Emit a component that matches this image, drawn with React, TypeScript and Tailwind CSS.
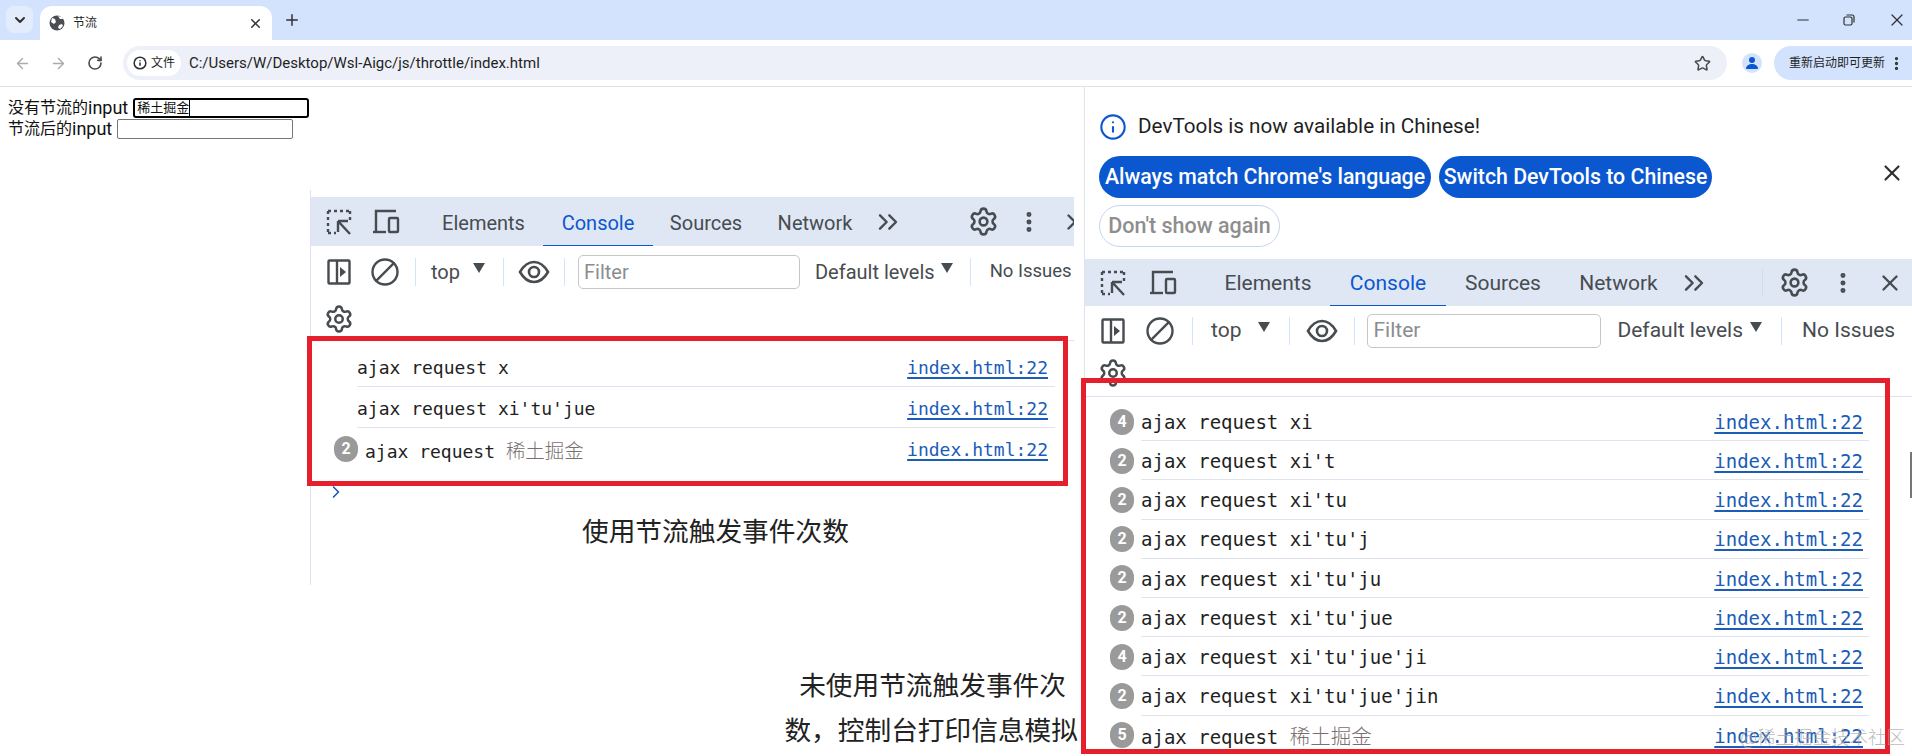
import React from 'react';
import { ArrowLeft, ArrowRight, Ban, ChevronDown, ChevronRight, ChevronsRight, EllipsisVertical, Info, Minus, Plus, RotateCw, Settings, Star, X } from 'lucide-react';

const InspectIcon = () => (
  <svg width="26" height="28" viewBox="0 0 26 28" fill="none" stroke="#474c50" strokeWidth="2.4">
    <path d="M2 3h22M2 3v22" strokeDasharray="3 3" />
    <path d="M24 3v9M2 25h8" strokeDasharray="3 3" />
    <path d="M12 13h10M12 13v11M12 13l12 13" />
  </svg>
);

const DeviceIcon = () => (
  <svg width="28" height="26" viewBox="0 0 28 26" fill="none" stroke="#474c50" strokeWidth="2.4">
    <path d="M4 22V2h20" />
    <path d="M1 23h13" />
    <rect x="17" y="9" width="9" height="14" rx="1" />
  </svg>
);

const SidebarIcon = () => (
  <svg width="24" height="26" viewBox="0 0 24 26" fill="none" stroke="#474c50" strokeWidth="2.4">
    <rect x="1.500" y="1.500" width="21" height="23" rx="1" />
    <path d="M10 2v22" />
    <path d="M13 8l6 5-6 5z" fill="#474c50" stroke="none" />
  </svg>
);

const EyeIcon = () => (
  <svg width="32" height="24" viewBox="0 0 32 24" fill="none" stroke="#474c50" strokeWidth="2.6">
    <path d="M2 12C6 5 11 2 16 2s10 3 14 10c-4 7-9 10-14 10S6 19 2 12z" />
    <circle cx="16" cy="12" r="5" />
  </svg>
);

const Caret = () => <span className="block w-0 h-0 border-x-[6px] border-x-transparent border-t-[10px] border-t-[#474c50]" />;
const Divider = () => <span className="block w-px h-7 bg-[#d3e3fd]" />;

const Tab = ({ label, active, className }: { label: string; active?: boolean; className: string }) => (
  <div className={`h-full flex items-center justify-center pt-[3px] ${className} ${active ? 'text-[#0b57d0] border-b border-[#0b57d0]' : 'text-[#474c50]'}`}>
    {label}
  </div>
);

const Badge = ({ count }: { count: number }) => (
  <span className="w-6 h-[26px] rounded-full bg-[#9a9a9a] text-white text-[16px] font-bold flex items-center justify-center font-['Roboto',sans-serif]">
    {count}
  </span>
);

const Row = ({ text, cjk, count, last, rowClass, gutterClass, contentClass, fontClass }: {
  text: string; cjk?: boolean; count?: number; last?: boolean; rowClass: string; gutterClass: string; contentClass: string; fontClass: string;
}) => (
  <div className={`flex ${rowClass} ${fontClass} font-['DejaVu_Sans_Mono','Noto_Sans_CJK_SC',monospace]`}>
    <div className={`flex items-center justify-end shrink-0 ${gutterClass}`}>{count ? <Badge count={count} /> : null}</div>
    <div className={`flex flex-1 items-center justify-between pt-[2px] ${last ? '' : 'border-b border-[#dfe3f0]'} ${contentClass}`}>
      <span className="text-[#1f1f1f] whitespace-pre">
        {text}
        {cjk ? ' ' : null}
        {cjk ? <span className="text-[#7a6f6f] text-[1.08em] font-['Noto_Sans_CJK_SC',serif] font-light">稀土掘金</span> : null}
      </span>
      <span className="text-[#1a5cb8] underline underline-offset-[3px] decoration-2">index.html:22</span>
    </div>
  </div>
);

const leftRows = [
  { text: 'ajax request x' },
  { text: "ajax request xi'tu'jue" },
  { text: 'ajax request', cjk: true, count: 2 },
];

const rightRows = [
  { text: 'ajax request xi', count: 4 },
  { text: "ajax request xi't", count: 2 },
  { text: "ajax request xi'tu", count: 2 },
  { text: "ajax request xi'tu'j", count: 2 },
  { text: "ajax request xi'tu'ju", count: 2 },
  { text: "ajax request xi'tu'jue", count: 2 },
  { text: "ajax request xi'tu'jue'ji", count: 4 },
  { text: "ajax request xi'tu'jue'jin", count: 2 },
  { text: 'ajax request', cjk: true, count: 5 },
];

export default function App() {
  return (
    <div className="relative w-[1912px] h-[756px] overflow-hidden bg-white font-['Roboto','Noto_Sans_CJK_SC',sans-serif]">
      {/* tab strip */}
      <div className="h-10 bg-[#d3e3fd] flex items-end text-[#1f1f1f]">
        <div className="w-[27px] h-[27px] ml-[6px] mb-[7px] rounded-lg bg-[#e3ecfd] flex items-center justify-center">
          <ChevronDown size={16} strokeWidth={3} color="#303030" />
        </div>
        <div className="w-[232px] h-[34px] ml-[7px] rounded-t-xl bg-white flex items-center pl-[9px] pr-[9px]">
          <svg width="16" height="16" viewBox="0 0 16 16">
            <circle cx="8" cy="8" r="7.500" fill="#4a4e52" />
            <path d="M3 3l3 1 1 3-2 2-3-2zM10 10l3-1 1 2-3 3-2-1zM9 1l2 3 3 0-1-2z" fill="#fff" />
          </svg>
          <span className="ml-2 text-xs flex-1">节流</span>
          <X size={15} strokeWidth={2.4} color="#303030" />
        </div>
        <Plus size={18} strokeWidth={2} color="#303030" className="ml-[11px] mb-[11px]" />
        <div className="flex-1" />
        <Minus size={18} strokeWidth={1.5} color="#303030" className="mb-[11px]" />
        <svg width="12" height="12" viewBox="0 0 12 12" fill="none" stroke="#303030" strokeWidth="1.2" className="ml-[31px] mb-[14px]">
          <rect x="1" y="3" width="8" height="8" rx="1.500" />
          <path d="M3.500 1H9a2 2 0 0 1 2 2v5.500" />
        </svg>
        <X size={20} strokeWidth={1.5} color="#303030" className="ml-[32px] mr-[5px] mb-[10px]" />
      </div>

      {/* toolbar */}
      <div className="h-[47px] bg-white border-b border-[#e3e3e3] flex items-center text-[#474c50]">
        <ArrowLeft size={17} color="#a8abaf" strokeWidth={2} className="ml-[14px]" />
        <ArrowRight size={17} color="#a8abaf" strokeWidth={2} className="ml-[19px]" />
        <RotateCw size={16} color="#474c50" strokeWidth={2.4} className="ml-[20px]" />
        <div className="w-[1605px] h-[34px] ml-[20px] rounded-full bg-[#edf0f8] flex items-center pl-[4px]">
          <div className="w-[54px] h-[26px] rounded-full bg-white flex items-center justify-center gap-1 text-[12px] text-[#1f1f1f]">
            <Info size={14} strokeWidth={2.6} color="#303030" />
            文件
          </div>
          <span className="ml-[8px] text-[15px] text-[#1f1f1f]">C:/Users/W/Desktop/Wsl-Aigc/js/throttle/index.html</span>
          <div className="flex-1" />
          <Star size={17} strokeWidth={2.2} color="#474c50" className="mr-[16px]" />
        </div>
        <div className="ml-[15px] w-5 h-5 rounded-full bg-[#d3e3fd] flex items-center justify-center overflow-hidden">
          <svg width="14" height="14" viewBox="0 0 14 14" fill="#0b57d0">
            <circle cx="7" cy="4" r="3" />
            <path d="M1 13c0-3.500 3-5 6-5s6 1.500 6 5z" />
          </svg>
        </div>
        <div className="ml-[12px] w-[138px] h-[34px] rounded-l-full bg-[#d3e3fd] flex items-center pl-[15px] text-[12px] text-[#1f1f1f]">
          重新启动即可更新
          <EllipsisVertical size={17} strokeWidth={2.6} color="#303030" className="ml-[3px]" />
        </div>
      </div>

      <div className="flex h-[669px]">
        {/* page */}
        <div className="w-[1084px] shrink-0 text-[16px] text-[#111]">
          <div className="pl-2 pt-[10px] leading-[21px] h-[54px]">
            <div className="flex items-center">
              没有节流的<span className="text-[18px]">input</span>
              <div className="ml-[5px] w-[176px] h-5 border-2 border-black rounded-[3px] text-[13px] leading-4 pl-[2px] flex items-center">
                稀土掘金<span className="w-px h-4 bg-black" />
              </div>
            </div>
            <div className="flex items-center">
              节流后的<span className="text-[18px]">input</span>
              <div className="ml-[5px] w-[176px] h-5 border border-[#767676] rounded-[2px]" />
            </div>
          </div>

          {/* pasted devtools */}
          <div className="ml-[310px] mt-[49px] w-[764px] h-[395px] pt-[7px] border-l border-[#dfe3f0] overflow-hidden">
            <div className="h-[49px] bg-[#dfe7f5] flex items-center text-[20px]">
              <div className="ml-[15px] shrink-0"><InspectIcon /></div>
              <div className="ml-[20px] shrink-0"><DeviceIcon /></div>
              <div className="ml-[24px] flex items-center h-full shrink-0">
                <Tab label="Elements" className="w-[119px]" />
                <Tab label="Console" active className="w-[110px]" />
                <Tab label="Sources" className="w-[106px]" />
                <Tab label="Network" className="w-[112px]" />
              </div>
              <ChevronsRight size={32} strokeWidth={1.8} color="#474c50" className="ml-[1px] shrink-0" />
              <Settings size={31} strokeWidth={2} color="#474c50" className="ml-[64px] shrink-0" />
              <EllipsisVertical size={26} strokeWidth={2.6} color="#474c50" className="ml-[17px] shrink-0" />
              <X size={26} strokeWidth={2.2} color="#474c50" className="ml-[20px] shrink-0" />
            </div>
            <div className="h-[52px] flex items-center text-[20px] text-[#474c50] whitespace-nowrap">
              <div className="ml-[16px] shrink-0"><SidebarIcon /></div>
              <Ban size={30} strokeWidth={1.9} color="#474c50" className="ml-[19px] shrink-0 -scale-x-100" />
              <div className="ml-[15px] shrink-0"><Divider /></div>
              <span className="ml-[15px]">top</span>
              <div className="ml-[13px] mb-2 shrink-0"><Caret /></div>
              <div className="ml-[18px] shrink-0"><Divider /></div>
              <div className="ml-[14px] shrink-0"><EyeIcon /></div>
              <div className="ml-[14px] shrink-0"><Divider /></div>
              <div className="ml-[13px] w-[222px] shrink-0 h-[34px] border border-[#c4c7c5] rounded-[5px] pl-[5px] flex items-center text-[#8a8d90]">Filter</div>
              <span className="ml-[15px]">Default levels</span>
              <div className="ml-[6px] mb-2 shrink-0"><Caret /></div>
              <div className="ml-[17px] shrink-0"><Divider /></div>
              <span className="ml-[19px] text-[18.5px]">No Issues</span>
            </div>
            <div className="h-[43px] border-b border-[#dfe3f0] flex items-center pl-[13px]">
              <Settings size={30} strokeWidth={2} color="#474c50" />
            </div>
            <div className="pt-[5px]">
              {leftRows.map((row, i) => (
                <Row
                  key={row.text}
                  {...row}
                  last={i === leftRows.length - 1}
                  fontClass="text-[18px]"
                  rowClass="h-[41px] mr-[19px]"
                  gutterClass={row.count ? 'w-[47px] mr-[7px]' : 'w-[46px]'}
                  contentClass="pr-[7px]"
                />
              ))}
            </div>
            <ChevronRight size={20} strokeWidth={2} color="#1a5cb8" className="ml-[15px] mt-[13px]" />
            <div className="mt-[12px] pl-[271px] text-[26.7px] leading-9 text-[#222]">使用节流触发事件次数</div>
          </div>

          <div className="mt-[79px] w-[1078px] text-right text-[26.7px] leading-[45px] text-[#222]">
            <div className="pr-[12px]">未使用节流触发事件次</div>
            <div>数，控制台打印信息模拟</div>
          </div>
        </div>

        {/* devtools */}
        <div className="flex-1 min-w-0 border-l border-[#dfe3f0] overflow-hidden">
          <div className="h-[172px] relative">
            <div className="pt-[24px] pl-[14px] flex items-center gap-[11px] text-[20.7px] text-[#1f1f1f]">
              <Info size={28} strokeWidth={1.8} color="#0b57d0" />
              DevTools is now available in Chinese!
            </div>
            <div className="mt-[14px] pl-[14px] flex gap-2 text-[21.3px] font-medium text-white">
              <div className="w-[332px] h-[42px] rounded-full bg-[#0b57d0] flex items-center justify-center">Always match Chrome's language</div>
              <div className="w-[273px] h-[42px] rounded-full bg-[#0b57d0] flex items-center justify-center">Switch DevTools to Chinese</div>
            </div>
            <div className="mt-[7px] ml-[14px] w-[181px] h-[42px] rounded-full border border-[#c7d5ee] flex items-center justify-center text-[21.5px] font-medium text-[#8e8e8e]">Don't show again</div>
            <X size={26} strokeWidth={2} color="#303030" className="absolute right-[7px] top-[73px]" />
          </div>
          <div className="h-[47px] bg-[#dfe7f5] flex items-center text-[21px]">
            <div className="ml-[15px] shrink-0"><InspectIcon /></div>
            <div className="ml-[23px] shrink-0"><DeviceIcon /></div>
            <div className="ml-[29px] flex items-center h-full shrink-0">
              <Tab label="Elements" className="w-[124px]" />
              <Tab label="Console" active className="w-[116px]" />
              <Tab label="Sources" className="w-[114px]" />
              <Tab label="Network" className="w-[117px]" />
            </div>
            <ChevronsRight size={32} strokeWidth={1.8} color="#474c50" className="ml-[1px] shrink-0" />
            <span className="ml-[52px] block w-px h-7 bg-[#d3dbea]" />
            <Settings size={31} strokeWidth={2} color="#474c50" className="ml-[16px] shrink-0" />
            <EllipsisVertical size={26} strokeWidth={2.6} color="#474c50" className="ml-[20px] shrink-0" />
            <X size={26} strokeWidth={2.2} color="#474c50" className="ml-[21px] shrink-0" />
          </div>
          <div className="h-[48px] flex items-center pt-[2px] text-[21px] text-[#474c50] whitespace-nowrap">
            <div className="ml-[16px] shrink-0"><SidebarIcon /></div>
            <Ban size={30} strokeWidth={1.9} color="#474c50" className="ml-[20px] shrink-0 -scale-x-100" />
            <div className="ml-[17px] shrink-0"><Divider /></div>
            <span className="ml-[18px]">top</span>
            <div className="ml-[17px] mb-2 shrink-0"><Caret /></div>
            <div className="ml-[19px] shrink-0"><Divider /></div>
            <div className="ml-[16px] shrink-0"><EyeIcon /></div>
            <div className="ml-[16px] shrink-0"><Divider /></div>
            <div className="ml-[12px] w-[234px] shrink-0 h-[34px] border border-[#c4c7c5] rounded-[5px] pl-[5px] flex items-center text-[#8a8d90]">Filter</div>
            <span className="ml-[16px]">Default levels</span>
            <div className="ml-[7px] mb-2 shrink-0"><Caret /></div>
            <div className="ml-[19px] shrink-0"><Divider /></div>
            <span className="ml-[20px]">No Issues</span>
            <div className="ml-[17px] shrink-0"><Divider /></div>
          </div>
          <div className="h-[43px] border-b border-[#dfe3f0] flex items-start pl-[13px] pt-[4px]">
            <Settings size={30} strokeWidth={2} color="#474c50" />
          </div>
          <div className="pt-[5px]">
            {rightRows.map((row, i) => (
              <Row
                key={row.text}
                {...row}
                last={i === rightRows.length - 1}
                fontClass="text-[19px]"
                rowClass="h-[39.2px] mr-[43px]"
                gutterClass="w-[49px] mr-[7px]"
                contentClass="pr-[6px]"
              />
            ))}
          </div>
        </div>
      </div>

      {/* annotation boxes */}
      <div className="absolute left-[307px] top-[336px] w-[761px] h-[150px] border-[5px] border-[#e61f2d]" />
      <div className="absolute left-[1081px] top-[378px] w-[809px] h-[376px] border-[5px] border-[#e61f2d]" />
      <div className="absolute right-0 top-[452px] w-[2px] h-[46px] bg-[#777]" />
      <div className="absolute right-[7px] bottom-[3px] text-[18.5px] font-light text-[#a9a9a9]/80">@稀土掘金技术社区</div>
    </div>
  );
}
